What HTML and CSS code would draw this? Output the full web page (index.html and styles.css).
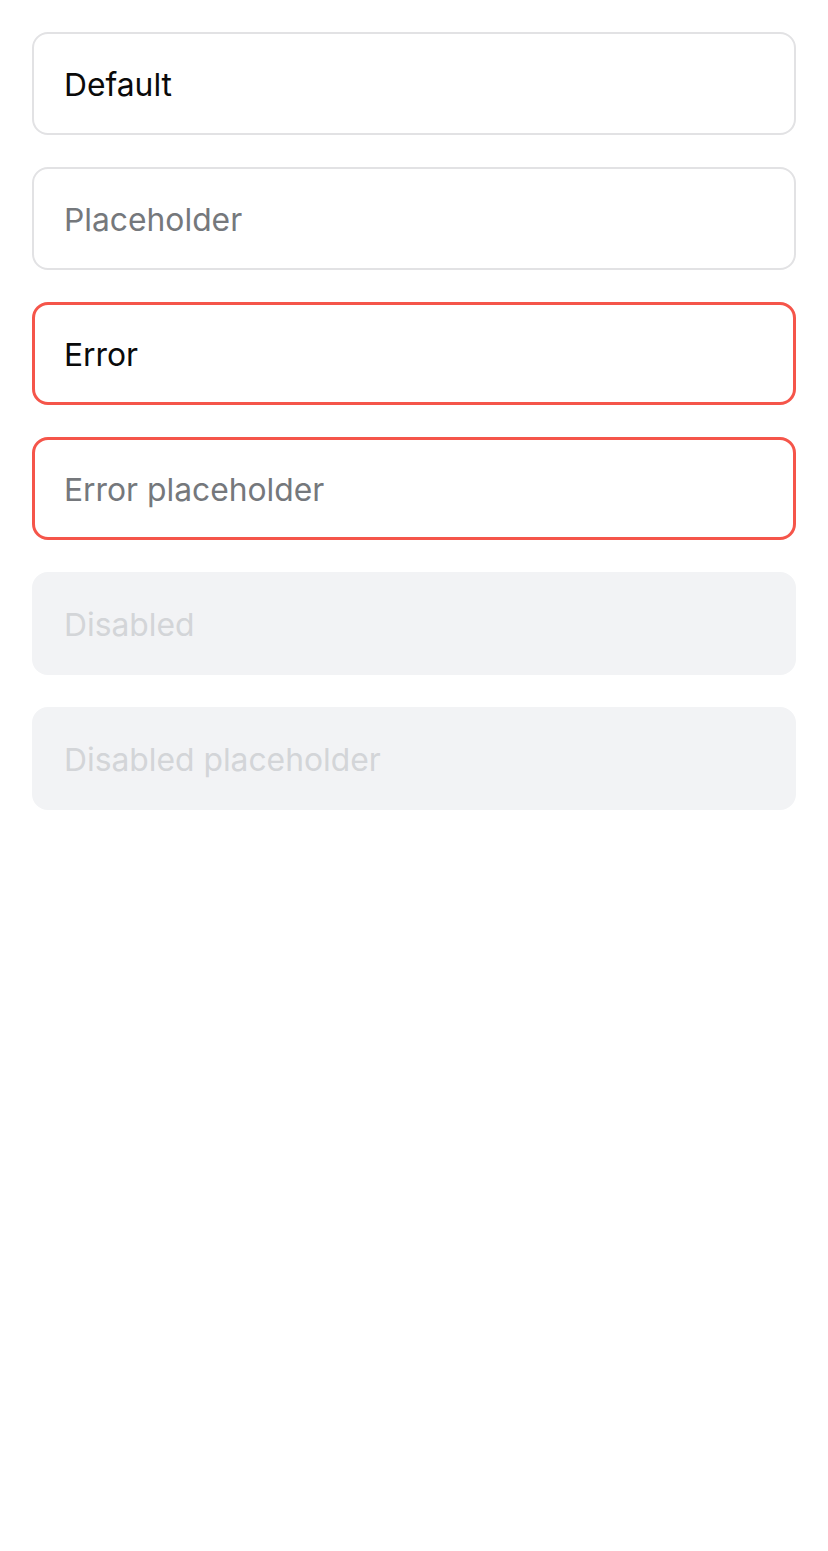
FILE: index.html
```html
<!DOCTYPE html>
<html lang="en">
<head>
<meta charset="utf-8">
<title>Inputs</title>
<link rel="stylesheet" href="styles.css">
</head>
<body>
<main class="stack">
  <input class="field" type="text" value="Default">
  <input class="field" type="text" placeholder="Placeholder">
  <input class="field field--error" type="text" value="Error">
  <input class="field field--error" type="text" placeholder="Error placeholder">
  <input class="field" type="text" value="Disabled" disabled>
  <input class="field" type="text" placeholder="Disabled placeholder" disabled>
</main>
</body>
</html>
```
FILE: styles.css
```css
* { box-sizing: border-box; }
html, body { margin: 0; background: #ffffff; }
body { font-family: Inter, "Noto Sans", sans-serif; }
.stack {
  display: flex;
  flex-direction: column;
  gap: 32px;
  padding: 32px;
}
.field {
  display: block;
  width: 100%;
  height: 103px;
  padding: 2px 30px 0;
  border: 2px solid #e2e2e4;
  border-radius: 16px;
  background: #ffffff;
  font-family: Inter, "Noto Sans", sans-serif;
  font-size: 31.8px;
  color: #0a0a0a;
  outline: none;
  -webkit-appearance: none;
  appearance: none;
}
.field::placeholder { color: #75787c; opacity: 1; }
.field--error { border: 3px solid #f5554a; padding: 2px 29px 0; }
.field:disabled {
  border-color: #f2f3f5;
  background: #f2f3f5;
  color: #d3d5d8;
  -webkit-text-fill-color: #d3d5d8;
}
.field:disabled::placeholder { color: #d3d5d8; -webkit-text-fill-color: #d3d5d8; }
```
